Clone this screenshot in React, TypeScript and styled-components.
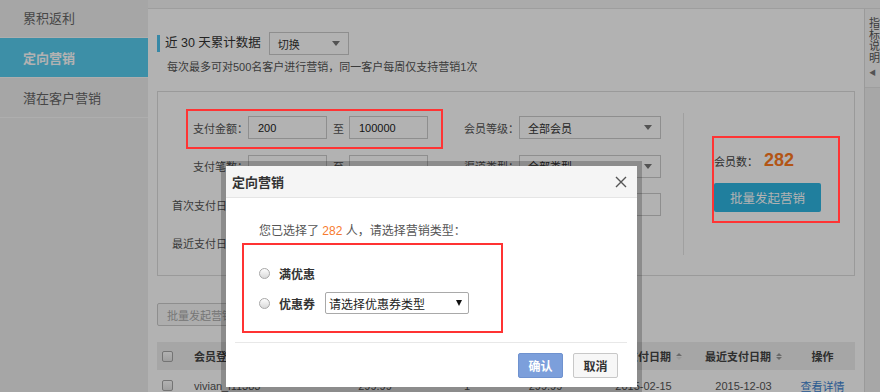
import React from "react";
import styled, { createGlobalStyle } from "styled-components";

const FONT = `"Liberation Sans", "Noto Sans CJK SC", sans-serif`;

const GlobalStyle = createGlobalStyle`
  html, body { margin: 0; padding: 0; background: #fff; }
  body { font-family: ${FONT}; font-size: 12px; color: #333; }
  #root { position: relative; width: 880px; height: 392px; overflow: hidden; }
  * { box-sizing: border-box; }
`;

const sideItems = ["累积返利", "定向营销", "潜在客户营销"];

const columns = [
  { title: "", align: "left" },
  { title: "会员登录名", align: "left" },
  { title: "支付金额", align: "center" },
  { title: "支付笔数", align: "center" },
  { title: "客单价", align: "center" },
  { title: "首次支付日期", align: "center", sort: "asc" },
  { title: "最近支付日期", align: "center", sort: "both" },
  { title: "操作", align: "center" },
];

const rows = [
  ["vivian_l11383", "299.99", "1", "299.99", "2015-02-15", "2015-12-03"],
  ["tb_8823150", "168.00", "2", "84.00", "2015-03-02", "2015-11-28"],
];

const Checkbox = styled.span`
  display: inline-block;
  width: 11px;
  height: 11px;
  margin-left: 5px;
  border: 1px solid #a6a6a6;
  border-radius: 2px;
  background: linear-gradient(#fff, #e4e4e4);
`;

const SortIcon = ({ dir }: { dir: string }) => (
  <SortWrap>
    <SortUp $on={dir === "asc" || dir === "both"} />
    <SortDown $on={dir === "both"} />
  </SortWrap>
);

const App: React.FC = () => {
  return (
    <>
      <GlobalStyle />
      <Page>
        <Sidebar>
          <SideList>
            {sideItems.map((item) => (
              <SideItem key={item} $active={item === "定向营销"}>
                {item}
              </SideItem>
            ))}
          </SideList>
        </Sidebar>

        <Main>
          <TopStrip />
          <MainBody>
            <Content>
              <TitleRow>
                <AccentBar />
                <Title>近 30 天累计数据</Title>
                <SelectBox $w={80} $ml={8}>
                  切换
                  <Caret />
                </SelectBox>
              </TitleRow>
              <Hint>每次最多可对500名客户进行营销，同一客户每周仅支持营销1次</Hint>

              <FilterPanel>
                <FilterFields>
                  <FilterRow>
                    <FieldGroup>
                      <Label>支付金额：</Label>
                      <TextInput readOnly value="200" />
                      <RangeSep>至</RangeSep>
                      <TextInput readOnly value="100000" />
                    </FieldGroup>
                    <FieldGroup>
                      <Label>会员等级：</Label>
                      <SelectBox $w={142}>
                        全部会员
                        <Caret />
                      </SelectBox>
                    </FieldGroup>
                  </FilterRow>
                  <FilterRow>
                    <FieldGroup>
                      <Label>支付笔数：</Label>
                      <TextInput readOnly value="" />
                      <RangeSep>至</RangeSep>
                      <TextInput readOnly value="" />
                    </FieldGroup>
                    <FieldGroup>
                      <Label>渠道类型：</Label>
                      <SelectBox $w={142}>
                        全部类型
                        <Caret />
                      </SelectBox>
                    </FieldGroup>
                  </FilterRow>
                  <FilterRow>
                    <FieldGroup>
                      <Label>首次支付日期：</Label>
                      <TextInput readOnly value="" />
                      <RangeSep>至</RangeSep>
                      <TextInput readOnly value="" />
                    </FieldGroup>
                    <FieldGroup>
                      <Label>会员昵称：</Label>
                      <TextInput readOnly value="" $w={142} />
                    </FieldGroup>
                  </FilterRow>
                  <FilterRow>
                    <FieldGroup>
                      <Label>最近支付日期：</Label>
                      <TextInput readOnly value="" />
                      <RangeSep>至</RangeSep>
                      <TextInput readOnly value="" />
                    </FieldGroup>
                  </FilterRow>
                </FilterFields>
                <PanelDivider />
                <SummaryArea>
                  <MemberCount>
                    会员数：<CountValue>282</CountValue>
                  </MemberCount>
                  <PrimaryButton>批量发起营销</PrimaryButton>
                </SummaryArea>
              </FilterPanel>

              <BulkButton>批量发起营销</BulkButton>

              <Table>
                <TableHead>
                  {columns.map((col, i) => (
                    <HeadCell key={i} $align={col.align}>
                      {i === 0 ? <Checkbox /> : col.title}
                      {col.sort && <SortIcon dir={col.sort} />}
                    </HeadCell>
                  ))}
                </TableHead>
                {rows.map((row) => (
                  <TableRow key={row[0]}>
                    <Cell $align="left">
                      <Checkbox />
                    </Cell>
                    {row.map((v, i) => (
                      <Cell key={i} $align={i === 0 ? "left" : "center"}>
                        {v}
                      </Cell>
                    ))}
                    <Cell $align="center">
                      <DetailLink>查看详情</DetailLink>
                    </Cell>
                  </TableRow>
                ))}
              </Table>
            </Content>

            <SidePanel>
              <SidePanelHead>
                <VerticalText>指标说明</VerticalText>
                <CollapseArrow>◀</CollapseArrow>
              </SidePanelHead>
            </SidePanel>
          </MainBody>
        </Main>
      </Page>

      <Mask />

      <Dialog>
        <DialogHeader>
          <DialogTitle>定向营销</DialogTitle>
          <CloseIcon width="12" height="12" viewBox="0 0 12 12">
            <path d="M1 1 L11 11 M11 1 L1 11" stroke="#555" strokeWidth="1.4" fill="none" />
          </CloseIcon>
        </DialogHeader>
        <DialogBody>
          <Intro>
            您已选择了 <Highlight>282</Highlight> 人，请选择营销类型：
          </Intro>
          <ChoiceBox>
            <ChoiceRow>
              <Radio />
              <ChoiceLabel>满优惠</ChoiceLabel>
            </ChoiceRow>
            <ChoiceRow>
              <Radio />
              <ChoiceLabel>优惠券</ChoiceLabel>
              <CouponSelect>
                请选择优惠券类型
                <BlackCaret />
              </CouponSelect>
            </ChoiceRow>
          </ChoiceBox>
        </DialogBody>
        <DialogFooter>
          <FooterLine />
          <FooterButtons>
            <DialogButton $primary>确认</DialogButton>
            <DialogButton>取消</DialogButton>
          </FooterButtons>
        </DialogFooter>
      </Dialog>

      <Annotation $x={186} $y={109} $w={257} $h={40} />
      <Annotation $x={712} $y={136} $w={128} $h={87} />
    </>
  );
};

export default App;

const Page = styled.div`
  display: flex;
  width: 880px;
  height: 392px;
`;

const Sidebar = styled.aside`
  flex: 0 0 148px;
  background: #eee;
  overflow: hidden;
`;

const SideList = styled.ul`
  list-style: none;
  margin: -2px 0 0;
  padding: 0;
`;

const SideItem = styled.li<{ $active?: boolean }>`
  height: 40px;
  display: flex;
  align-items: center;
  padding-left: 23px;
  font-size: 13px;
  border-bottom: 1px solid #fafafa;
  color: ${(p) => (p.$active ? "#fff" : "#666")};
  background: ${(p) => (p.$active ? "#58cdf0" : "transparent")};
  font-weight: ${(p) => (p.$active ? "bold" : "normal")};
`;

const Main = styled.div`
  flex: 1;
  display: flex;
  flex-direction: column;
  min-width: 0;
`;

const TopStrip = styled.div`
  flex: 0 0 9px;
  background: #f5f5f5;
  border-bottom: 1px solid #e3e3e3;
`;

const MainBody = styled.div`
  flex: 1;
  display: flex;
  min-height: 0;
`;

const Content = styled.div`
  flex: 0 0 716px;
  padding: 0 9px;
`;

const TitleRow = styled.div`
  display: flex;
  align-items: center;
  height: 23px;
  margin-top: 23px;
`;

const AccentBar = styled.span`
  width: 3px;
  height: 17px;
  background: #4fc3ee;
  margin-right: 5px;
`;

const Title = styled.span`
  font-size: 12.5px;
  color: #333;
  line-height: 23px;
`;

const SelectBox = styled.div<{ $w: number; $ml?: number }>`
  width: ${(p) => p.$w}px;
  height: 23px;
  margin-left: ${(p) => p.$ml || 0}px;
  border: 1px solid #ccc;
  background: #fff;
  display: flex;
  align-items: center;
  justify-content: space-between;
  padding: 0 8px 0 8px;
  font-size: 11px;
  color: #333;
`;

const Caret = styled.span`
  width: 0;
  height: 0;
  border-left: 4px solid transparent;
  border-right: 4px solid transparent;
  border-top: 5px solid #777;
`;

const Hint = styled.div`
  margin-top: 5px;
  padding-left: 10px;
  font-size: 11px;
  line-height: 14px;
  color: #555;
`;

const FilterPanel = styled.div`
  margin-top: 17px;
  height: 185px;
  border: 1px solid #ddd;
  display: flex;
`;

const FilterFields = styled.div`
  flex: 0 0 525px;
  padding: 24px 0 0 14px;
  display: flex;
  flex-direction: column;
  gap: 15.5px;
`;

const FilterRow = styled.div`
  display: flex;
  align-items: center;
  height: 23px;
  gap: 15px;
`;

const FieldGroup = styled.div`
  display: flex;
  align-items: center;
`;

const Label = styled.span`
  width: 76px;
  text-align: right;
  white-space: nowrap;
  font-size: 11px;
  color: #555;
`;

const TextInput = styled.input<{ $w?: number }>`
  width: ${(p) => p.$w || 79}px;
  height: 23px;
  border: 1px solid #ccc;
  padding: 0 0 0 9px;
  font-family: ${FONT};
  font-size: 11px;
  color: #222;
  background: #fff;
  outline: none;
`;

const RangeSep = styled.span`
  margin: 0 5px 0 6px;
  font-size: 11px;
  color: #555;
`;

const PanelDivider = styled.div`
  width: 1px;
  height: 142px;
  align-self: center;
  background: #e5e5e5;
`;

const SummaryArea = styled.div`
  flex: 1;
  padding: 0 0 6px 30px;
  display: flex;
  flex-direction: column;
  justify-content: center;
`;

const MemberCount = styled.div`
  display: flex;
  align-items: baseline;
  font-size: 11px;
  color: #444;
  height: 22px;
`;

const CountValue = styled.span`
  margin-left: 6px;
  font-size: 18px;
  font-weight: bold;
  color: #ff7a1f;
`;

const PrimaryButton = styled.div`
  margin-top: 11px;
  width: 107px;
  height: 29px;
  border-radius: 2px;
  background: #2eb6e3;
  color: #fff;
  font-size: 12.5px;
  display: flex;
  align-items: center;
  justify-content: center;
`;

const BulkButton = styled.div`
  margin-top: 27px;
  width: 95px;
  height: 23px;
  border: 1px solid #ccc;
  border-radius: 2px;
  background: #f8f8f8;
  color: #aaa;
  font-size: 11px;
  display: flex;
  align-items: center;
  padding-left: 9px;
`;

const Table = styled.div`
  margin-top: 16px;
`;

const gridCols = "30px 130px 116px 68px 89px 107px 93px 65px";

const TableHead = styled.div`
  display: grid;
  grid-template-columns: ${gridCols};
  height: 28px;
  align-items: center;
  background: #eee;
  font-size: 11px;
  font-weight: bold;
  color: #444;
`;

const HeadCell = styled.div<{ $align: string }>`
  display: flex;
  align-items: center;
  justify-content: ${(p) => (p.$align === "left" ? "flex-start" : "center")};
  padding-left: ${(p) => (p.$align === "left" ? 7 : 0)}px;
  white-space: nowrap;
  &:first-child {
    padding-left: 0;
  }
`;

const SortWrap = styled.span`
  display: inline-flex;
  flex-direction: column;
  gap: 1px;
  margin-left: 5px;
`;

const SortUp = styled.span<{ $on: boolean }>`
  width: 0;
  height: 0;
  border-left: 3px solid transparent;
  border-right: 3px solid transparent;
  border-bottom: 3px solid ${(p) => (p.$on ? "#999" : "#ddd")};
`;

const SortDown = styled.span<{ $on: boolean }>`
  width: 0;
  height: 0;
  border-left: 3px solid transparent;
  border-right: 3px solid transparent;
  border-top: 3px solid ${(p) => (p.$on ? "#999" : "#ddd")};
`;

const TableRow = styled.div`
  display: grid;
  grid-template-columns: ${gridCols};
  height: 32px;
  align-items: center;
  border-bottom: 1px solid #eee;
  font-size: 11px;
  color: #555;
`;

const Cell = styled(HeadCell)``;

const DetailLink = styled.span`
  color: #3b82d0;
`;

const SidePanel = styled.div`
  flex: 1;
  border-left: 1px solid #ddd;
  background: #f0f0f0;
  overflow: hidden;
`;

const SidePanelHead = styled.div`
  height: 79px;
  padding: 9px 0 0 4px;
  background: #f6f6f6;
  border-bottom: 1px solid #e3e3e3;
`;

const VerticalText = styled.div`
  width: 12px;
  font-size: 11px;
  line-height: 11.5px;
  color: #555;
  word-break: break-all;
`;

const CollapseArrow = styled.div`
  margin-top: 5px;
  font-size: 7px;
  line-height: 8px;
  color: #777;
`;

const Mask = styled.div`
  position: absolute;
  inset: 0;
  background: rgba(0, 0, 0, 0.3);
  z-index: 10;
`;

const Dialog = styled.div`
  position: absolute;
  left: 221px;
  top: 161px;
  width: 421px;
  height: 231px;
  border: 5px solid rgba(0, 0, 0, 0.21);
  background: #fff;
  background-clip: padding-box;
  z-index: 20;
  display: flex;
  flex-direction: column;
`;

const DialogHeader = styled.div`
  height: 32px;
  flex: 0 0 32px;
  background: #f5f5f5;
  border-bottom: 1px solid #e5e5e5;
  display: flex;
  align-items: center;
  justify-content: space-between;
  padding: 0 10px 0 6px;
`;

const DialogTitle = styled.span`
  font-size: 13px;
  font-weight: bold;
  color: #333;
`;

const CloseIcon = styled.svg`
  display: block;
`;

const DialogBody = styled.div`
  padding: 25px 0 0 16px;
`;

const Intro = styled.div`
  padding-left: 17px;
  font-size: 12px;
  line-height: 16px;
  color: #555;
`;

const Highlight = styled.span`
  color: #f77b2f;
`;

const ChoiceBox = styled.div`
  margin-top: 4px;
  width: 261px;
  height: 90px;
  border: 2px solid #f33;
  padding: 17px 0 0 15px;
  display: flex;
  flex-direction: column;
  gap: 8px;
`;

const ChoiceRow = styled.div`
  display: flex;
  align-items: center;
  height: 22px;
`;

const Radio = styled.span`
  width: 11px;
  height: 11px;
  border-radius: 50%;
  border: 1px solid #a8a8a8;
  background: linear-gradient(#fdfdfd, #d9d9d9);
`;

const ChoiceLabel = styled.span`
  margin-left: 9px;
  font-size: 12px;
  font-weight: bold;
  color: #333;
`;

const CouponSelect = styled.div`
  margin-left: 10px;
  width: 144px;
  height: 22px;
  border: 1px solid #a9a9a9;
  border-radius: 2px;
  padding: 0 6px 0 3px;
  display: flex;
  align-items: center;
  justify-content: space-between;
  font-size: 12px;
  color: #222;
`;

const BlackCaret = styled.span`
  width: 0;
  height: 0;
  border-left: 3.5px solid transparent;
  border-right: 3.5px solid transparent;
  border-top: 6px solid #111;
`;

const DialogFooter = styled.div`
  margin-top: 9px;
`;

const FooterLine = styled.div`
  margin: 0 10px 0 9px;
  border-top: 1px solid #e8e8e8;
`;

const FooterButtons = styled.div`
  display: flex;
  justify-content: flex-end;
  gap: 10px;
  padding: 10px 19px 0 0;
`;

const DialogButton = styled.div<{ $primary?: boolean }>`
  width: 45px;
  height: 25px;
  border-radius: 2px;
  border: 1px solid ${(p) => (p.$primary ? "#6f92cf" : "#c8c8c8")};
  background: ${(p) => (p.$primary ? "#7c9fdb" : "#f7f7f7")};
  color: ${(p) => (p.$primary ? "#fff" : "#333")};
  font-size: 12px;
  font-weight: bold;
  display: flex;
  align-items: center;
  justify-content: center;
`;

const Annotation = styled.div<{ $x: number; $y: number; $w: number; $h: number }>`
  position: absolute;
  left: ${(p) => p.$x}px;
  top: ${(p) => p.$y}px;
  width: ${(p) => p.$w}px;
  height: ${(p) => p.$h}px;
  border: 2px solid #ff3434;
  z-index: 30;
  pointer-events: none;
`;
